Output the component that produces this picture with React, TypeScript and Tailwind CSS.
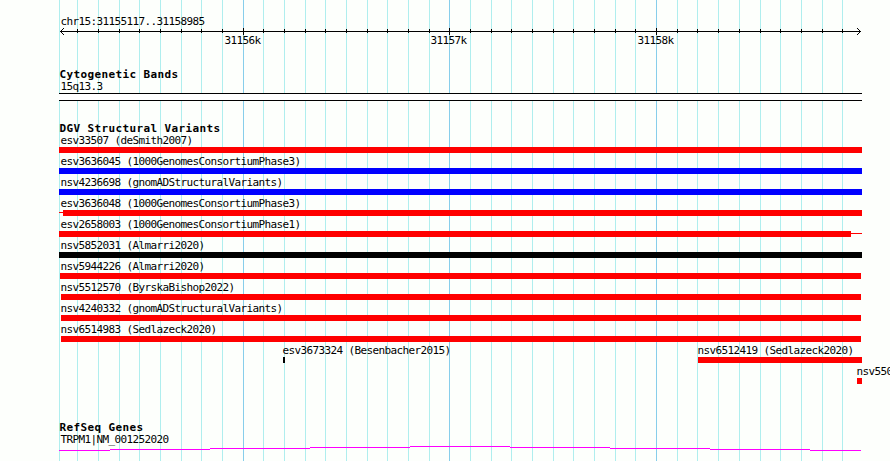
type Segment = { id: string; offset: number; width: number; color: string; before?: string; after?: string };

const minorLines = [
  59, 77, 98, 119, 139, 160, 181, 201, 222, 263, 284, 305, 325, 346, 367, 387, 408, 429,
  470, 491, 511, 532, 553, 573, 594, 615, 635, 677, 697, 718, 739, 760, 780, 801, 822, 842,
];
const majorLines = [243, 449, 656];

const variants: Segment[] = [
  { id: 'esv33507 (deSmith2007)', offset: 0, width: 803, color: 'bg-[#ff0000]' },
  { id: 'esv3636045 (1000GenomesConsortiumPhase3)', offset: 0, width: 803, color: 'bg-[#0000ff]' },
  { id: 'nsv4236698 (gnomADStructuralVariants)', offset: 0, width: 803, color: 'bg-[#0000ff]' },
  { id: 'esv3636048 (1000GenomesConsortiumPhase3)', offset: 0, width: 799, color: 'bg-[#ff0000]', before: 'w-[4px]' },
  { id: 'esv2658003 (1000GenomesConsortiumPhase1)', offset: 0, width: 792, color: 'bg-[#ff0000]', after: 'w-[11px]' },
  { id: 'nsv5852031 (Almarri2020)', offset: 0, width: 803, color: 'bg-black' },
  { id: 'nsv5944226 (Almarri2020)', offset: 1, width: 801, color: 'bg-[#ff0000]' },
  { id: 'nsv5512570 (ByrskaBishop2022)', offset: 2, width: 800, color: 'bg-[#ff0000]' },
  { id: 'nsv4240332 (gnomADStructuralVariants)', offset: 2, width: 800, color: 'bg-[#ff0000]' },
  { id: 'nsv6514983 (Sedlazeck2020)', offset: 2, width: 800, color: 'bg-[#ff0000]' },
];

const label = 'block h-[15px] whitespace-pre text-[11px] leading-[17px] tracking-[-0.622px]';
const heading = 'block h-[12px] whitespace-pre text-[11px] leading-[14px] font-bold tracking-[0.378px]';

function Grid() {
  return (
    <svg className="absolute inset-0" width="890" height="461" shapeRendering="crispEdges">
      {minorLines.map((x) => (
        <rect key={x} x={x} y="0" width="1" height="461" fill="#afeeee" />
      ))}
      {majorLines.map((x) => (
        <rect key={x} x={x} y="0" width="1" height="461" fill="#87ceeb" />
      ))}
    </svg>
  );
}

function Axis() {
  return (
    <svg className="block" width="890" height="8" viewBox="0 28 890 8" shapeRendering="crispEdges">
      <rect x="60" y="31" width="801" height="1" />
      {minorLines.slice(1).map((x) => (
        <rect key={x} x={x} y="29" width="1" height="4" />
      ))}
      {majorLines.map((x) => (
        <rect key={x} x={x} y="28" width="1" height="7" />
      ))}
      <path d="M61 30h1v1h-1zM62 29h1v1h-1zM63 28h1v1h-1zM61 32h1v1h-1zM62 33h1v1h-1zM63 34h1v1h-1z" />
      <path d="M859 30h1v1h-1zM858 29h1v1h-1zM857 28h1v1h-1zM859 32h1v1h-1zM858 33h1v1h-1zM857 34h1v1h-1z" />
    </svg>
  );
}

function Variant({ item }: { item: Segment }) {
  return (
    <div className="h-[21px]">
      <span className={`${label} pl-[1.5px]`}>{item.id}</span>
      <div className="flex h-[6px]">
        {item.before && <div className={`mt-[2px] h-px bg-[#ff0000] ${item.before}`} />}
        <div className={`h-[6px] ${item.color}`} style={{ marginLeft: item.offset, width: item.width }} />
        {item.after && <div className={`mt-[2px] h-px bg-[#ff0000] ${item.after}`} />}
      </div>
    </div>
  );
}

export default function App() {
  return (
    <div className="relative h-[461px] w-[890px] overflow-hidden bg-[#fdfffc] font-['DejaVu_Sans_Mono',monospace] text-black">
      <Grid />
      <div className="relative flex flex-col">
        <div className="h-[28px] pt-[13px] pl-[60.5px]">
          <span className={label}>chr15:31155117..31158985</span>
        </div>
        <Axis />
        <div className="flex h-[32px] pl-[224.5px]">
          <span className={`${label} -mt-[4px] w-[206px]`}>31156k</span>
          <span className={`${label} -mt-[4px] w-[207px]`}>31157k</span>
          <span className={`${label} -mt-[4px]`}>31158k</span>
        </div>

        <section className="h-[54px] pl-[59px]">
          <span className={`${heading} pl-[0.5px]`}>Cytogenetic Bands</span>
          <span className={`${label} -mt-[2px] pl-[1.5px]`}>15q13.3</span>
          <div className="h-[8px] w-[803px] border-y border-black bg-white" />
        </section>

        <section className="h-[299px] pl-[59px]">
          <span className={`${heading} mb-[-2px] pl-[0.5px]`}>DGV Structural Variants</span>
          {variants.map((item) => (
            <Variant key={item.id} item={item} />
          ))}
          <div className="flex h-[21px] pl-[223px]">
            <div className="w-[416px]">
              <span className={`${label} pl-[0.5px]`}>esv3673324 (Besenbacher2015)</span>
              <div className="ml-px h-[6px] w-[2px] bg-black" />
            </div>
            <div>
              <span className={`${label} -ml-[0.5px]`}>nsv6512419 (Sedlazeck2020)</span>
              <div className="h-[6px] w-[164px] bg-[#ff0000]" />
            </div>
          </div>
          <div className="h-[21px] pl-[798px]">
            <span className={`${label} -ml-[0.5px]`}>nsv550</span>
            <div className="h-[6px] w-[5px] bg-[#ff0000]" />
          </div>
        </section>

        <section>
          <div className="pl-[59px]">
            <span className={`${heading} pl-[0.5px]`}>RefSeq Genes</span>
            <span className={`${label} -mt-[2px] pl-[1.5px]`}>TRPM1|NM_001252020</span>
          </div>
          <svg className="block" width="890" height="15" viewBox="0 446 890 15" shapeRendering="crispEdges" fill="#ff00ff">
            <rect x="59" y="450" width="51" height="1" />
            <rect x="110" y="449" width="100" height="1" />
            <rect x="210" y="448" width="100" height="1" />
            <rect x="310" y="447" width="100" height="1" />
            <rect x="410" y="446" width="100" height="1" />
            <rect x="510" y="447" width="100" height="1" />
            <rect x="610" y="448" width="100" height="1" />
            <rect x="710" y="449" width="100" height="1" />
            <rect x="810" y="450" width="51" height="1" />
          </svg>
        </section>
      </div>
    </div>
  );
}
